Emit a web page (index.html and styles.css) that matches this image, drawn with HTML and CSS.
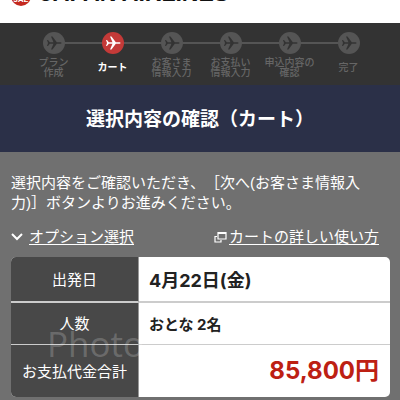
FILE: index.html
```html
<!DOCTYPE html>
<html lang="ja">
<head>
    <meta charset="UTF-8">
    <meta name="viewport" content="width=device-width, initial-scale=1.0">
    <title>選択内容の確認（カート）</title>
    <link rel="stylesheet" href="styles.css">
</head>
<body>
    <svg class="symbols" aria-hidden="true">
        <symbol id="plane" viewBox="0 0 22 22">
            <path d="M4 8h1l1.800 2.200h3.700L8 4.500h1.500l4.300 5.700h3.200c1 0 1.600.4 1.600.8s-.6.800-1.600.8h-3.200l-4.300 5.700H8l2.500-5.700H6.800L5 14H4l1-3z"></path>
        </symbol>
    </svg>

    <header class="header">
        <span class="emblem">JAL</span>
        <span class="brand">JAPAN AIRLINES</span>
    </header>

    <!-- Booking steps -->
    <ol class="steps">
        <li class="step"><svg class="step-icon"><use href="#plane"></use></svg><span class="step-name">プラン<br>作成</span></li>
        <li class="step current" aria-current="step"><svg class="step-icon"><use href="#plane"></use></svg><span class="step-name">カート</span></li>
        <li class="step"><svg class="step-icon"><use href="#plane"></use></svg><span class="step-name">お客さま<br>情報入力</span></li>
        <li class="step"><svg class="step-icon"><use href="#plane"></use></svg><span class="step-name">お支払い<br>情報入力</span></li>
        <li class="step"><svg class="step-icon"><use href="#plane"></use></svg><span class="step-name">申込内容の<br>確認</span></li>
        <li class="step"><svg class="step-icon"><use href="#plane"></use></svg><span class="step-name">完了</span></li>
    </ol>

    <h1 class="page-title">選択内容の確認（カート）</h1>

    <main class="content">
        <p class="lead">選択内容をご確認いただき、［次へ(お客さま情報入力)］ボタンよりお進みください。</p>

        <nav class="links">
            <a href="#" class="link">
                <svg class="chevron" viewBox="0 0 12 12"><path d="M1 3l5 5 5-5"></path></svg>
                <span class="link-text">オプション選択</span>
            </a>
            <a href="#" class="link">
                <svg class="window" viewBox="0 0 13 12"><path d="M4 1.500h8v6.500H4zM4 2.500h8M3 5.500H1V11h6V9"></path></svg>
                <span class="link-text">カートの詳しい使い方</span>
            </a>
        </nav>

        <!-- Cart summary -->
        <div class="summary-wrap">
            <table class="summary">
                <tr class="date">
                    <th scope="row">出発日</th>
                    <td>4月22日(金)</td>
                </tr>
                <tr class="people">
                    <th scope="row">人数</th>
                    <td>おとな 2名</td>
                </tr>
                <tr class="total">
                    <th scope="row">お支払代金合計</th>
                    <td>85,800円</td>
                </tr>
            </table>
            <span class="watermark">Photo</span>
        </div>
    </main>
</body>
</html>
```

FILE: styles.css
```css
* {
    margin: 0;
    padding: 0;
    box-sizing: border-box;
}

body {
    background-color: #707070;
    color: #fff;
    font-family: "Liberation Sans", "Noto Sans CJK JP", sans-serif;
    font-size: 15px;
    text-spacing-trim: space-all;
    overflow: hidden;
}

.symbols {
    display: none;
}

.header {
    display: flex;
    align-items: flex-end;
    gap: 9px;
    height: 23px;
    padding: 0 11px 17px;
    background-color: #fff;
    color: #111;
}

.emblem {
    width: 20px;
    height: 20px;
    flex: none;
    border-radius: 50%;
    background-color: #c42a20;
    color: #fff;
    font-size: 8px;
    font-weight: bold;
    font-style: italic;
    line-height: 28px;
    text-align: center;
}

.brand {
    padding-bottom: 5px;
    font-size: 23px;
    font-weight: bold;
    line-height: 16px;
    white-space: nowrap;
}

.steps {
    display: flex;
    height: 62px;
    padding: 9px 22px 0 24px;
    background-color: #333;
    list-style: none;
}

.step {
    position: relative;
    display: flex;
    flex: 1;
    flex-direction: column;
    align-items: center;
    color: #666;
}

/* Line to the next step */
.step:not(:last-child)::after {
    content: "";
    position: absolute;
    top: 10px;
    left: 50%;
    width: 100%;
    height: 2px;
    background-color: #555;
}

.step-icon {
    position: relative;
    z-index: 1;
    width: 22px;
    height: 22px;
    flex: none;
    border-radius: 50%;
    background-color: #555;
    fill: #333;
}

.step-name {
    display: flex;
    flex: none;
    align-items: center;
    height: 24px;
    margin-top: 2px;
    font-size: 10px;
    font-weight: 500;
    line-height: 10px;
    text-align: center;
    white-space: nowrap;
}

.current {
    color: #fff;
}

.current .step-icon {
    background-color: #c43a38;
    fill: #fff;
}

.current .step-name {
    font-weight: bold;
}

.page-title {
    padding: 21px 0 19px;
    background-color: #2b3048;
    font-size: 19px;
    line-height: 27px;
    text-align: center;
}

.content {
    padding: 21px 10px 0 11px;
}

.lead {
    padding-right: 12px;
    line-height: 20px;
}

.links {
    display: flex;
    justify-content: space-between;
    padding: 14px 0 10px;
}

.link {
    display: flex;
    align-items: center;
    gap: 6px;
    color: #fff;
    line-height: 20px;
    text-decoration: none;
}

.link:last-child {
    gap: 2px;
    padding-right: 11px;
}

.link-text {
    text-decoration: underline;
    text-decoration-thickness: 1px;
    text-underline-offset: 2px;
}

.chevron {
    width: 12px;
    height: 12px;
    fill: none;
    stroke: #fff;
    stroke-width: 2;
}

.window {
    width: 13px;
    height: 12px;
    fill: none;
    stroke: #fff;
    stroke-width: 1.2;
}

.summary-wrap {
    position: relative;
}

.summary {
    width: 100%;
    border-spacing: 0;
    border-radius: 5px;
    background-color: #fff;
    color: #222;
    overflow: hidden;
}

.summary th {
    width: 128px;
    padding-bottom: 2px;
    border-right: 1px solid #999;
    background-color: #484848;
    color: #fff;
    font-weight: normal;
}

.summary td {
    padding: 0 11px 0 10px;
    font-family: Inter, "Noto Sans CJK JP", sans-serif;
    font-weight: bold;
}

.date th,
.date td {
    height: 46px;
    border-bottom: 2px solid #ccc;
}

.people th,
.people td {
    height: 42px;
    border-bottom: 1px solid #ccc;
}

.total th,
.total td {
    height: 52px;
}

.date td {
    font-size: 18px;
}

.summary .total td {
    color: #bd2013;
    font-size: 24px;
    line-height: 30px;
    text-align: right;
}

.watermark {
    position: absolute;
    top: 67px;
    left: 36px;
    color: rgba(255, 255, 255, 0.2);
    font-family: "Open Sans", sans-serif;
    font-size: 35px;
    line-height: 40px;
}
```
